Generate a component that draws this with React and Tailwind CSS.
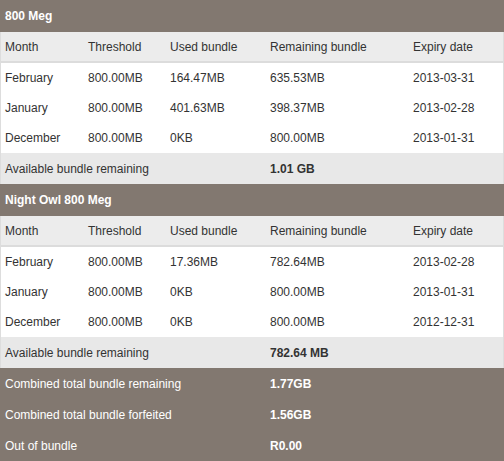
const bundles = [
  {
    name: "800 Meg",
    rows: [
      ["February", "800.00MB", "164.47MB", "635.53MB", "2013-03-31"],
      ["January", "800.00MB", "401.63MB", "398.37MB", "2013-02-28"],
      ["December", "800.00MB", "0KB", "800.00MB", "2013-01-31"],
    ],
    available: "1.01 GB",
  },
  {
    name: "Night Owl 800 Meg",
    rows: [
      ["February", "800.00MB", "17.36MB", "782.64MB", "2013-02-28"],
      ["January", "800.00MB", "0KB", "800.00MB", "2013-01-31"],
      ["December", "800.00MB", "0KB", "800.00MB", "2012-12-31"],
    ],
    available: "782.64 MB",
  },
];

const totals = [
  ["Combined total bundle remaining", "1.77GB", "h-[31px]"],
  ["Combined total bundle forfeited", "1.56GB", "h-[31px]"],
  ["Out of bundle", "R0.00", "h-[32px]"],
];

const cols = "grid grid-cols-[83px_82px_100px_143px_1fr] items-center";
const headings = ["Month", "Threshold", "Used bundle", "Remaining bundle", "Expiry date"];

// rows inside the bordered block get 4px padding so text lines up with the totals
const BundleTable = ({ bundle }) => (
  <section>
    <div className="h-8 flex items-center px-[5px] bg-[#827870] text-white font-bold">
      {bundle.name}
    </div>
    <div className="border-x border-[#dddddd]">
      <div className={`${cols} h-[31px] bg-[#ececec] border-b-2 border-[#dcdcdc]`}>
        {headings.map((h) => (
          <div key={h} className="pl-[4px]">{h}</div>
        ))}
      </div>
      {bundle.rows.map((row) => (
        <div key={row[0]} className={`${cols} h-[30px] bg-white`}>
          {row.map((cell, i) => (
            <div key={i} className="pl-[4px]">{cell}</div>
          ))}
        </div>
      ))}
      <div className={`${cols} h-[31px] bg-[#e8e8e8]`}>
        <div className="pl-[4px] col-span-3">Available bundle remaining</div>
        <div className="pl-[4px] font-bold">{bundle.available}</div>
      </div>
    </div>
  </section>
);

export default function App() {
  return (
    <div
      className="w-[504px] text-[12px] text-[#333333] bg-[#827870]"
      style={{ fontFamily: '"Liberation Sans", Arial, sans-serif' }}
    >
      {bundles.map((b) => (
        <BundleTable key={b.name} bundle={b} />
      ))}
      <div className="text-white">
        {totals.map(([label, value, h]) => (
          <div key={label} className={`${cols} ${h}`}>
            <div className="pl-[5px] col-span-3">{label}</div>
            <div className="pl-[5px] font-bold">{value}</div>
          </div>
        ))}
      </div>
    </div>
  );
}
